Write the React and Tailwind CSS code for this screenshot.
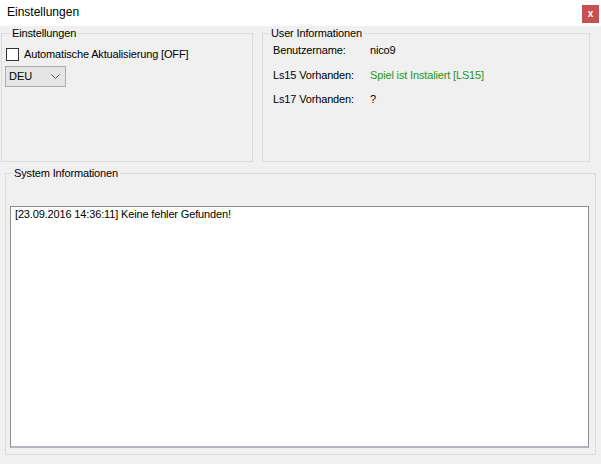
export default function App() {
  return (
    <div className="w-[601px] h-[464px] bg-[#f0f0f0] flex flex-col overflow-hidden text-black font-['Liberation_Sans',Arial,sans-serif] text-[11px] leading-[13px] tracking-[-0.15px]">
      {/* window title bar */}
      <div className="h-[26px] bg-white flex items-start justify-between shrink-0 tracking-normal">
        <span className="pl-[7px] pt-[4px] text-[12px] leading-[16px]">Einstellungen</span>
        <button className="mt-[5px] mr-[2px] w-[17px] h-[18px] bg-[#c75050] text-white text-[10px] font-bold leading-[18px] flex items-center justify-center">
          x
        </button>
      </div>

      <div className="flex mt-[1px]">
        {/* settings group */}
        <fieldset className="ml-[1px] w-[252px] h-[135px] border border-[#dcdcdc] flex flex-col">
          <legend className="ml-[8px] px-[2px]">Einstellungen</legend>
          <label className="mt-[8px] ml-[4px] flex items-center h-[13px]">
            <span className="w-[13px] h-[13px] border border-[#333] bg-white shrink-0" />
            <span className="ml-[5px]">Automatische Aktualisierung [OFF]</span>
          </label>
          <div className="mt-[5px] ml-[3px] w-[61px] h-[21px] bg-[#e5e5e5] border border-[#adadad] flex items-center justify-between pl-[3px] pr-[4px] tracking-normal">
            <span>DEU</span>
            <svg width="9" height="5" viewBox="0 0 9 5" className="mr-[1px]">
              <path d="M0.5 0.5 L4.5 4.5 L8.5 0.5" fill="none" stroke="#555" strokeWidth="1" />
            </svg>
          </div>
        </fieldset>

        {/* user information group */}
        <fieldset className="ml-[9px] w-[328px] h-[135px] border border-[#dcdcdc]">
          <legend className="ml-[6px] px-[2px]">User Informationen</legend>
          <div className="ml-[10px] grid grid-cols-[97px_1fr]">
            <span className="mt-[4px]">Benutzername:</span>
            <span className="mt-[4px]">nico9</span>
            <span className="mt-[12px]">Ls15 Vorhanden:</span>
            <span className="mt-[12px] text-[#239823]">Spiel ist Instaliert [LS15]</span>
            <span className="mt-[11px]">Ls17 Vorhanden:</span>
            <span className="mt-[11px]">?</span>
          </div>
        </fieldset>
      </div>

      {/* system information group */}
      <fieldset className="mt-[5px] ml-[5px] w-[591px] h-[288px] border border-[#dcdcdc]">
        <legend className="ml-[6px] px-[2px]">System Informationen</legend>
        <div className="mt-[26px] ml-[4px] w-[579px] h-[242px] bg-white border border-[#8c8c94] border-b-2 border-b-[#b4b4bc] pl-[4px] pt-[1px]">
          [23.09.2016 14:36:11] Keine fehler Gefunden!
        </div>
      </fieldset>
    </div>
  );
}
